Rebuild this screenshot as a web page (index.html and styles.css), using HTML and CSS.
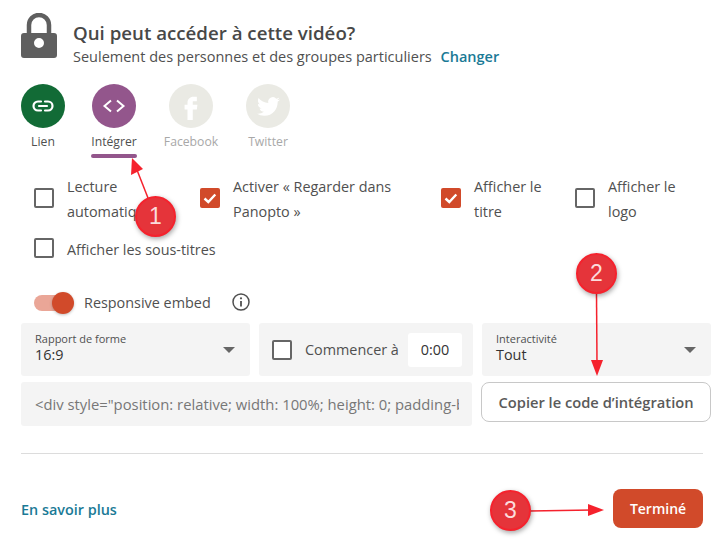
FILE: index.html
```html
<!DOCTYPE html>
<html lang="fr">
<head>
    <meta charset="UTF-8">
    <meta name="viewport" content="width=device-width, initial-scale=1.0">
    <title>Partager</title>
    <link rel="stylesheet" href="styles.css">
</head>
<body>
    <div class="dialog">
        <header class="access">
            <svg class="lock" viewBox="0 0 36 45" width="36" height="45">
                <path d="M8 22V12a10 10 0 0 1 20 0v10" fill="none" stroke="#5f5f5f" stroke-width="4.500"/>
                <path fill="#5f5f5f" fill-rule="evenodd" d="M3 20h30a3 3 0 0 1 3 3v19a3 3 0 0 1-3 3H3a3 3 0 0 1-3-3V23a3 3 0 0 1 3-3zm15 5a5 5 0 1 0 0 10a5 5 0 0 0 0-10z"/>
            </svg>
            <div>
                <h1>Qui peut accéder à cette vidéo?</h1>
                <p class="access-sub">Seulement des personnes et des groupes particuliers <a class="link change" href="#">Changer</a></p>
            </div>
        </header>

        <nav class="share-tabs">
            <div class="tab tab-lien">
                <span class="circle green">
                    <svg viewBox="0 0 24 24" width="24" height="24"><path fill="none" stroke="#fff" stroke-width="2.200" stroke-linecap="round" d="M10 7.500H7a4.500 4.500 0 0 0 0 9h3M14 7.500h3a4.500 4.500 0 0 1 0 9h-3M8 12h8"/></svg>
                </span>
                <span class="tab-label">Lien</span>
            </div>
            <div class="tab tab-integrer">
                <span class="circle purple">
                    <svg viewBox="0 0 24 24" width="24" height="24"><path fill="none" stroke="#fff" stroke-width="2" d="M9 6.500 2.500 12 9 17.500M15 6.500l6.500 5.500-6.500 5.500"/></svg>
                </span>
                <span class="tab-label">Intégrer</span>
                <span class="tab-bar"></span>
            </div>
            <div class="tab tab-facebook off">
                <span class="circle grey">
                    <svg viewBox="0 0 24 24" width="28" height="28"><path fill="#fff" d="M14 8h3V4h-3c-2.800 0-5 2.200-5 5v2H6.500v4H9v9h4.500v-9H17l.5-4h-4V9c0-.6.0-1 .5-1z"/></svg>
                </span>
                <span class="tab-label">Facebook</span>
            </div>
            <div class="tab tab-twitter off">
                <span class="circle grey">
                    <svg viewBox="0 0 24 24" width="23" height="23"><path fill="#fff" d="M23.953 4.570a10 10 0 0 1-2.825.775 4.958 4.958 0 0 0 2.163-2.723c-.951.555-2.005.959-3.127 1.184a4.920 4.920 0 0 0-8.384 4.482C7.690 8.095 4.067 6.130 1.640 3.162a4.822 4.822 0 0 0-.666 2.475c0 1.710.870 3.213 2.188 4.096a4.904 4.904 0 0 1-2.228-.616v.060a4.923 4.923 0 0 0 3.946 4.827 4.996 4.996 0 0 1-2.212.085 4.936 4.936 0 0 0 4.604 3.417 9.867 9.867 0 0 1-6.102 2.105c-.390 0-.779-.023-1.170-.067a13.995 13.995 0 0 0 7.557 2.209c9.053 0 13.998-7.496 13.998-13.985 0-.210 0-.420-.015-.630A9.935 9.935 0 0 0 24 4.590z"/></svg>
                </span>
                <span class="tab-label">Twitter</span>
            </div>
        </nav>

        <section class="options">
            <label class="option"><span class="box"></span><span>Lecture automatique</span></label>
            <label class="option">
                <span class="box checked"><svg viewBox="0 0 20 20" width="20" height="20"><path fill="none" stroke="#fff" stroke-width="2.400" d="M4.500 10.500l3.800 3.500 7-7.500"/></svg></span>
                <span>Activer « Regarder dans Panopto »</span>
            </label>
            <label class="option">
                <span class="box checked"><svg viewBox="0 0 20 20" width="20" height="20"><path fill="none" stroke="#fff" stroke-width="2.400" d="M4.500 10.500l3.800 3.500 7-7.500"/></svg></span>
                <span>Afficher le titre</span>
            </label>
            <label class="option"><span class="box"></span><span>Afficher le logo</span></label>
            <label class="option option-wide"><span class="box"></span><span>Afficher les sous-titres</span></label>
        </section>

        <div class="responsive">
            <span class="toggle"><span class="knob"></span></span>
            <span class="responsive-label">Responsive embed</span>
            <svg class="info" viewBox="0 0 18 18" width="18" height="18">
                <circle cx="9" cy="9" r="8" fill="none" stroke="#505050" stroke-width="1.500"/>
                <path d="M9 8v5.500" stroke="#505050" stroke-width="1.800"/>
                <circle cx="9" cy="5.300" r="1.100" fill="#505050"/>
            </svg>
        </div>

        <section class="controls">
            <div class="field select">
                <div class="select-text">
                    <div class="field-label">Rapport de forme</div>
                    <div class="field-value">16:9</div>
                </div>
                <span class="caret"></span>
            </div>
            <div class="field start">
                <span class="box"></span>
                <span class="start-label">Commencer à</span>
                <span class="time">0:00</span>
            </div>
            <div class="field select">
                <div class="select-text">
                    <div class="field-label">Interactivité</div>
                    <div class="field-value">Tout</div>
                </div>
                <span class="caret"></span>
            </div>
            <div class="code"><span class="code-text">&lt;div style="position: relative; width: 100%; height: 0; padding-bottom: 56.25%;"&gt;</span></div>
            <button class="copy">Copier le code d’intégration</button>
        </section>

        <hr class="sep">

        <footer class="actions">
            <a class="link more" href="#">En savoir plus</a>
            <button class="done">Terminé</button>
        </footer>
    </div>

    <!-- annotations par-dessus la capture -->
    <svg class="arrows" viewBox="0 0 727 544" width="727" height="544">
        <g stroke="#f5222d" stroke-width="1.500" fill="#f5222d">
            <path d="M148 198 137 170"/>
            <path stroke="none" d="M132 158 143 169 131 175z"/>
            <path d="M596.500 294 597 364"/>
            <path stroke="none" d="M597 376 591 360H603z"/>
            <path d="M530 511 592 510"/>
            <path stroke="none" d="M604 510 588 504V516z"/>
        </g>
    </svg>
    <span class="badge badge-1">1</span>
    <span class="badge badge-2">2</span>
    <span class="badge badge-3">3</span>
</body>
</html>
```

FILE: styles.css
```css
* {
    box-sizing: border-box;
    margin: 0;
    padding: 0;
}
body {
    font-family: 'Open Sans', sans-serif;
    font-size: 14.400px;
    color: #505050;
    background: #fff;
    width: 727px;
    height: 544px;
    overflow: hidden;
    position: relative;
}
.dialog {
    padding: 13px 16px 0 21px;
}
.link {
    color: #1a7a96;
    font-weight: 600;
    text-decoration: none;
}

/* qui peut acceder */
.access {
    display: flex;
    gap: 16px;
    height: 71px;
}
.lock {
    flex: none;
}
.access h1 {
    font-size: 18.700px;
    font-weight: 600;
    color: #484848;
    line-height: 24px;
    margin-top: 8px;
}
.access-sub {
    line-height: 24px;
    font-size: 14.500px;
    white-space: nowrap;
}
.change {
    margin-left: 5px;
}

/* onglets */
.share-tabs {
    display: flex;
    height: 78px;
}
.tab {
    display: flex;
    flex-direction: column;
    align-items: center;
    width: 44px;
}
.tab-lien { margin-right: 27px; }
.tab-integrer { margin-right: 33px; }
.tab-facebook { margin-right: 33px; }
.circle {
    width: 44px;
    height: 44px;
    border-radius: 50%;
    flex: none;
    display: flex;
    align-items: center;
    justify-content: center;
}
.green { background: #126b36; }
.purple { background: #93568c; }
.grey { background: #eaeae4; }
.tab-label {
    font-size: 12.200px;
    line-height: 18px;
    margin-top: 5px;
    white-space: nowrap;
}
.off .tab-label { color: #a8a8a8; }
.tab-bar {
    width: 46px;
    height: 4px;
    flex: none;
    margin-top: 3px;
    border-radius: 2px;
    background: #93568c;
}

/* cases a cocher */
.options {
    display: grid;
    grid-template-columns: 166px 241px 134px 134px;
    row-gap: 14px;
    padding-left: 13px;
    line-height: 24.500px;
    height: 118px;
    align-content: start;
    margin-top: 13px;
}
.option {
    display: flex;
    align-items: flex-start;
    gap: 13px;
    padding-right: 30px;
}
.option .box {
    margin-top: 13px;
}
.option-wide {
    grid-column: 1 / span 2;
}
.option-wide .box {
    margin-top: 0;
}
.box {
    flex: none;
    width: 20px;
    height: 20px;
    border: 2px solid #666;
    border-radius: 2px;
    background: #fff;
    display: block;
}
.box.checked {
    border: none;
    background: #d14a2a;
}

/* responsive */
.responsive {
    display: flex;
    align-items: center;
    height: 20px;
    padding-left: 13px;
    margin-bottom: 10px;
    gap: 11px;
}
.toggle {
    width: 38px;
    height: 16px;
    border-radius: 8px;
    background: #eaa697;
    position: relative;
}
.knob {
    position: absolute;
    right: -2px;
    top: -3px;
    width: 22px;
    height: 22px;
    border-radius: 50%;
    background: #d14a2a;
    box-shadow: 0 1px 3px rgba(0, 0, 0, 0.25);
}
.responsive-label {
    margin: -2px 0 0 1px;
}
.info {
    margin-left: 10px;
    margin-top: -2px;
}

/* reglages */
.controls {
    display: grid;
    grid-template-columns: 229px 214px 229px;
    grid-template-rows: 53px 44px;
    column-gap: 9px;
    row-gap: 6px;
    width: 690px;
}
.field {
    background: #f4f4f4;
    border-radius: 3px;
    display: flex;
    align-items: center;
}
.select {
    justify-content: space-between;
    padding: 0 15px 0 14px;
}
.select-text {
    margin-top: -3px;
}
.field-label {
    font-size: 11px;
    line-height: 14px;
}
.field-value {
    font-size: 14.400px;
    line-height: 18px;
    color: #333;
}
.caret {
    width: 0;
    height: 0;
    border-left: 6px solid transparent;
    border-right: 6px solid transparent;
    border-top: 6px solid #666;
}
.start {
    padding: 0 11px 0 13px;
}
.start-label {
    margin-left: 13px;
    flex: 1;
    white-space: nowrap;
}
.time {
    width: 54px;
    height: 34px;
    background: #fff;
    border-radius: 3px;
    color: #333;
    font-size: 14.400px;
    line-height: 34px;
    text-align: center;
}
.code {
    grid-column: 1 / span 2;
    width: 451px;
    background: #f4f4f4;
    border-radius: 3px;
    padding: 0 13px 0 14px;
    display: flex;
    align-items: center;
    color: #777;
    font-size: 14.800px;
}
.code-text {
    display: block;
    overflow: hidden;
    white-space: nowrap;
}
.copy {
    height: 40px;
    margin-left: -1px;
    background: #fff;
    border: 1px solid #c8c8c8;
    border-radius: 8px;
    font-family: inherit;
    font-size: 14.700px;
    font-weight: 600;
    color: #5a5a5a;
    white-space: nowrap;
}
.sep {
    border: none;
    border-top: 1px solid #dcdcdc;
    margin-top: 27px;
    width: 682px;
}

/* bas */
.actions {
    display: flex;
    justify-content: space-between;
    align-items: center;
    width: 682px;
    margin-top: 35px;
}
.more {
    padding-top: 2px;
}
.done {
    width: 90px;
    height: 39px;
    border: none;
    border-radius: 8px;
    background: #d14a2a;
    color: #fff;
    font-family: inherit;
    font-size: 14px;
    font-weight: 600;
}

/* annotations */
.arrows {
    position: absolute;
    left: 0;
    top: 0;
}
.badge {
    position: absolute;
    width: 41px;
    height: 41px;
    border-radius: 50%;
    border: 2px solid #f5222d;
    background: #e5343a;
    color: #fbdcdc;
    font-family: 'Liberation Sans', sans-serif;
    font-size: 23px;
    line-height: 37px;
    text-align: center;
    box-shadow: 1px 2px 5px rgba(0, 0, 0, 0.35);
}
.badge-1 { left: 135px; top: 196px; }
.badge-2 { left: 576px; top: 253px; }
.badge-3 { left: 490px; top: 490px; }
```
